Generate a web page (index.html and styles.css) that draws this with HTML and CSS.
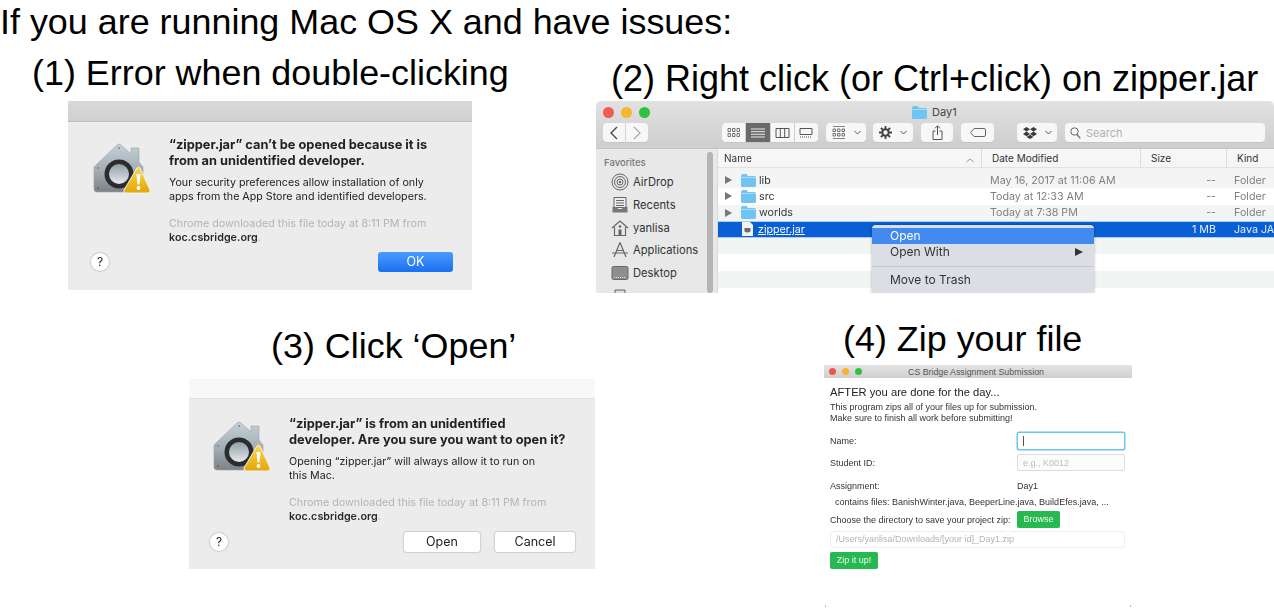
FILE: index.html
```html
<!DOCTYPE html>
<html lang="en">
<head>
  <meta charset="UTF-8" />
  <meta name="viewport" content="width=device-width, initial-scale=1.0"/>
  <title>Mac OS X issues</title>
  <link rel="stylesheet" href="styles.css">
</head>
<body>

  <svg class="defs" width="0" height="0">
    <defs>
      <linearGradient id="house" x1="0" y1="0" x2="0" y2="1">
        <stop offset="0" stop-color="#c4d2d9"/>
        <stop offset="0.55" stop-color="#a3adb3"/>
        <stop offset="1" stop-color="#7d8286"/>
      </linearGradient>
      <linearGradient id="knob" x1="0" y1="0" x2="0" y2="1">
        <stop offset="0" stop-color="#8f9fa8"/>
        <stop offset="1" stop-color="#e6e9ea"/>
      </linearGradient>
      <linearGradient id="warn" x1="0" y1="0" x2="0" y2="1">
        <stop offset="0" stop-color="#fbd84a"/>
        <stop offset="1" stop-color="#e2a50d"/>
      </linearGradient>
      <symbol id="gatekeeper" viewBox="0 0 58 56">
        <path d="M1 26 L24 4 Q26 2 28 4 L38 13 V7 H46 V21 L50 26 V48 Q50 51 47 51 H4 Q1 51 1 48 Z" fill="url(#house)" stroke="#9aa1a6" stroke-width=".6"/>
        <circle cx="5" cy="27" r="1" fill="#7d858a"/>
        <circle cx="26" cy="7" r="1" fill="#7d858a"/>
        <circle cx="5" cy="47" r="1" fill="#5f6468"/>
        <circle cx="26" cy="33" r="14.5" fill="#2c2c2e"/>
        <circle cx="26" cy="33" r="10" fill="url(#knob)"/>
        <path d="M44 27 Q45.5 25.5 47 27 L57 49 Q57.5 52 55 52 H33 Q30.5 52 31 49 Z" fill="url(#warn)" stroke="#f4f1e4" stroke-width="1"/>
        <path d="M43.4 33 H47.6 L46.4 43.5 H44.6 Z" fill="#fff"/>
        <circle cx="45.5" cy="47" r="1.9" fill="#fff"/>
      </symbol>
      <symbol id="folder" viewBox="0 0 15 13">
        <path d="M0 2 Q0 0 2 0 H5.5 L7 2 H13.5 Q15 2 15 3.5 V11.5 Q15 13 13.5 13 H1.5 Q0 13 0 11.5 Z" fill="#6fc4f2"/>
        <path d="M0 3.5 H15" stroke="#a8defa" stroke-width="1"/>
      </symbol>
    </defs>
  </svg>

  <h1 class="title">If you are running Mac OS X and have issues:</h1>

  <div class="row row-top">
    <section class="step step-one">
      <h2 class="step-head">(1) Error when double-clicking</h2>
      <div class="dialog dialog-one">
        <div class="dialog-bar"></div>
        <div class="dialog-main">
          <svg class="gate-icon"><use href="#gatekeeper"/></svg>
          <div class="dialog-text">
            <p class="d-title">“zipper.jar” can’t be opened because it is<br>from an unidentified developer.</p>
            <p class="d-body">Your security preferences allow installation of only<br>apps from the App Store and identified developers.</p>
            <p class="d-note">Chrome downloaded this file today at 8:11 PM from<br><b>koc.csbridge.org</b>.</p>
          </div>
        </div>
        <div class="dialog-foot">
          <span class="help">?</span>
          <span class="mac-btn mac-btn-blue">OK</span>
        </div>
      </div>
    </section>

    <section class="step step-two">
      <h2 class="step-head">(2) Right click (or Ctrl+click) on zipper.jar</h2>
      <div class="finder">
        <div class="finder-title">
          <i class="light light-red"></i><i class="light light-yellow"></i><i class="light light-green"></i>
          <span class="finder-name"><svg class="folder-sm"><use href="#folder"/></svg>Day1</span>
        </div>
        <div class="toolbar">
          <div class="tool tool-nav">
            <span class="nav-cell"><svg width="8" height="14" viewBox="0 0 8 14"><path d="M7 1 L1 7 L7 13" fill="none" stroke="#444" stroke-width="1.3"/></svg></span>
            <span class="nav-cell nav-next"><svg width="8" height="14" viewBox="0 0 8 14"><path d="M1 1 L7 7 L1 13" fill="none" stroke="#aaa" stroke-width="1.3"/></svg></span>
          </div>
          <div class="tool tool-views">
            <span class="view-cell"><svg width="14" height="9" viewBox="0 0 14 9"><path d="M1 .5h2.5v3H1zM5.5 .5h2.5v3H5.5zM10 .5h2.5v3H10zM1 5.5h2.5v3H1zM5.5 5.5h2.5v3H5.5zM10 5.5h2.5v3H10z" fill="none" stroke="#555" stroke-width=".8"/></svg></span>
            <span class="view-cell view-on"><svg width="14" height="10" viewBox="0 0 14 10"><path d="M0 1h14M0 3.7h14M0 6.3h14M0 9h14" stroke="#e8e8e8" stroke-width="1"/></svg></span>
            <span class="view-cell"><svg width="15" height="10" viewBox="0 0 15 10"><path d="M1 .5h13v9H1zM5.3 .5v9M9.7 .5v9" fill="none" stroke="#555" stroke-width="1"/></svg></span>
            <span class="view-cell"><svg width="14" height="10" viewBox="0 0 14 10"><path d="M1 .5h12v6H1z" fill="none" stroke="#555" stroke-width="1"/><path d="M1 9h12" stroke="#555" stroke-width="1.2" stroke-dasharray="1 1"/></svg></span>
          </div>
          <div class="tool tool-arrange">
            <svg width="14" height="13" viewBox="0 0 14 13"><path d="M1 .5h12M1 12.5h12" stroke="#666" stroke-width=".8"/><path d="M1 3h2.5v2.5H1zM5.5 3h2.5v2.5H5.5zM10 3h2.5v2.5H10zM1 7.5h2.5V10H1zM5.5 7.5h2.5V10H5.5zM10 7.5h2.5V10H10z" fill="none" stroke="#555" stroke-width=".8"/></svg>
            <svg class="chev" width="7" height="5" viewBox="0 0 7 5"><path d="M.5 1 L3.5 4 L6.5 1" fill="none" stroke="#555" stroke-width="1"/></svg>
          </div>
          <div class="tool tool-action">
            <svg width="13" height="13" viewBox="0 0 13 13"><circle cx="6.5" cy="6.5" r="3.2" fill="none" stroke="#444" stroke-width="2"/><path d="M6.5 0v3M6.5 10v3M0 6.5h3M10 6.5h3M1.9 1.9l2.1 2.1M9 9l2.1 2.1M11.1 1.9L9 4M4 9l-2.1 2.1" stroke="#444" stroke-width="1.8"/></svg>
            <svg class="chev" width="7" height="5" viewBox="0 0 7 5"><path d="M.5 1 L3.5 4 L6.5 1" fill="none" stroke="#555" stroke-width="1"/></svg>
          </div>
          <div class="tool tool-share">
            <svg width="11" height="15" viewBox="0 0 11 15"><path d="M3.5 6H1v8.5h9V6H7.5M5.5 10V1M3 3.3 L5.5 .8 L8 3.3" fill="none" stroke="#555" stroke-width="1"/></svg>
          </div>
          <div class="tool tool-tag">
            <svg width="16" height="9" viewBox="0 0 16 9"><path d="M4 .5H14Q15.5 .5 15.5 2V7Q15.5 8.5 14 8.5H4L.6 4.5Z" fill="none" stroke="#666" stroke-width="1"/></svg>
          </div>
          <div class="tool tool-drop">
            <svg width="14" height="12" viewBox="0 0 14 12"><path d="M3.5 0 L7 2.3 L3.5 4.6 L0 2.3ZM10.5 0 L14 2.3 L10.5 4.6 L7 2.3ZM3.5 4.6 L7 6.9 L3.5 9.2 L0 6.9ZM10.5 4.6 L14 6.9 L10.5 9.2 L7 6.9ZM3.5 10 L7 7.8 L10.5 10 L7 12Z" fill="#3a3a3a"/></svg>
            <svg class="chev" width="7" height="5" viewBox="0 0 7 5"><path d="M.5 1 L3.5 4 L6.5 1" fill="none" stroke="#555" stroke-width="1"/></svg>
          </div>
          <div class="tool tool-search">
            <svg width="11" height="12" viewBox="0 0 11 12"><circle cx="4.5" cy="4.5" r="3.7" fill="none" stroke="#666" stroke-width="1"/><path d="M7 7.5 L10.3 11.3" stroke="#666" stroke-width="1.2"/></svg>
            <span>Search</span>
          </div>
        </div>
        <div class="finder-body">
          <aside class="sidebar">
            <div class="side-head">Favorites</div>
            <div class="side-item">
              <svg width="18" height="18" viewBox="0 0 18 18"><g fill="none" stroke="#666" stroke-width="1"><circle cx="9" cy="9" r="8"/><circle cx="9" cy="9" r="5.5"/><circle cx="9" cy="9" r="3"/></g><circle cx="9" cy="9" r="1.2" fill="#666"/></svg>
              AirDrop
            </div>
            <div class="side-item">
              <svg width="18" height="18" viewBox="0 0 18 18"><path d="M3 1.5h12v10H3z" fill="#eee" stroke="#666"/><path d="M5 4.5h8M5 7h8M5 9.5h8" stroke="#666"/><path d="M1.5 11H6l1 2h4l1-2h4.5v5.5h-15z" fill="#777"/></svg>
              Recents
            </div>
            <div class="side-item">
              <svg width="18" height="18" viewBox="0 0 18 18"><path d="M1 9 L9 2 L17 9M3.5 8v8.5h11V8" fill="none" stroke="#666" stroke-width="1.2"/><path d="M7.5 10.5h3v6h-3z" fill="#666"/><circle cx="9" cy="7.5" r="1.3" fill="#666"/></svg>
              yanlisa
            </div>
            <div class="side-item">
              <svg width="18" height="18" viewBox="0 0 18 18"><path d="M9 1.5 L3 16M9 1.5 L15 16M1 12h16M5 9.5h8" fill="none" stroke="#666" stroke-width="1.2"/></svg>
              Applications
            </div>
            <div class="side-item">
              <svg width="18" height="18" viewBox="0 0 18 18"><rect x="1" y="2.5" width="16" height="13" rx="1.5" fill="#8b8f92" stroke="#666"/><path d="M3 13.5h12" stroke="#ddd" stroke-dasharray="1 1"/></svg>
              Desktop
            </div>
            <div class="side-item">
              <svg width="18" height="18" viewBox="0 0 18 18"><path d="M4 3h10v14H4z" fill="#ddd" stroke="#666"/></svg>
            </div>
            <span class="side-scroll"></span>
          </aside>
          <div class="list">
            <div class="list-head">
              <span class="cell-name">Name<svg class="sort" width="8" height="5" viewBox="0 0 8 5"><path d="M.5 4 L4 1 L7.5 4" fill="none" stroke="#999" stroke-width="1"/></svg></span>
              <span class="cell-date">Date Modified</span>
              <span class="cell-size">Size</span>
              <span class="cell-kind">Kind</span>
            </div>
            <div class="list-row row-first stripe">
              <span class="cell-name"><i class="arrow"></i><svg class="folder-sm"><use href="#folder"/></svg>lib</span>
              <span class="cell-date">May 16, 2017 at 11:06 AM</span>
              <span class="cell-size">--</span>
              <span class="cell-kind">Folder</span>
            </div>
            <div class="list-row">
              <span class="cell-name"><i class="arrow"></i><svg class="folder-sm"><use href="#folder"/></svg>src</span>
              <span class="cell-date">Today at 12:33 AM</span>
              <span class="cell-size">--</span>
              <span class="cell-kind">Folder</span>
            </div>
            <div class="list-row stripe">
              <span class="cell-name"><i class="arrow"></i><svg class="folder-sm"><use href="#folder"/></svg>worlds</span>
              <span class="cell-date">Today at 7:38 PM</span>
              <span class="cell-size">--</span>
              <span class="cell-kind">Folder</span>
            </div>
            <div class="list-row row-sel">
              <span class="cell-name"><svg class="jar" width="11" height="14" viewBox="0 0 11 14"><path d="M0 0h8l3 3v11H0z" fill="#f2f2f2"/><path d="M2.5 6h6v3.5q-3 2-6 0z" fill="#6b6b6b"/></svg>zipper.jar</span>
              <span class="cell-date"></span>
              <span class="cell-size">1 MB</span>
              <span class="cell-kind">Java JA</span>
            </div>
            <div class="list-row stripe"></div>
            <div class="list-row"></div>
            <div class="list-row stripe"></div>
            <div class="menu">
              <div class="menu-item menu-on">Open</div>
              <div class="menu-item">Open With<i class="menu-arrow"></i></div>
              <div class="menu-sep"></div>
              <div class="menu-item">Move to Trash</div>
            </div>
          </div>
        </div>
      </div>
    </section>
  </div>

  <div class="row row-bottom">
    <section class="step step-three">
      <h2 class="step-head">(3) Click ‘Open’</h2>
      <div class="dialog dialog-three">
        <div class="dialog-bar"></div>
        <div class="dialog-main">
          <svg class="gate-icon"><use href="#gatekeeper"/></svg>
          <div class="dialog-text">
            <p class="d-title">“zipper.jar” is from an unidentified<br>developer. Are you sure you want to open it?</p>
            <p class="d-body">Opening “zipper.jar” will always allow it to run on<br>this Mac.</p>
            <p class="d-note">Chrome downloaded this file today at 8:11 PM from<br><b>koc.csbridge.org</b>.</p>
          </div>
        </div>
        <div class="dialog-foot">
          <span class="help">?</span>
          <span class="mac-btn mac-btn-open">Open</span>
          <span class="mac-btn mac-btn-cancel">Cancel</span>
        </div>
      </div>
    </section>

    <section class="step step-four">
      <h2 class="step-head">(4) Zip your file</h2>
      <div class="zipapp">
        <div class="zip-title">
          <i class="zlight zlight-red"></i><i class="zlight zlight-yellow"></i><i class="zlight zlight-green"></i>
          <span>CS Bridge Assignment Submission</span>
        </div>
        <div class="zip-body">
          <h3 class="zip-head">AFTER you are done for the day...</h3>
          <p class="zip-intro">This program zips all of your files up for submission.<br>Make sure to finish all work before submitting!</p>
          <div class="zip-field zip-name">
            <label>Name:</label>
            <span class="zip-input zip-focus"><i class="caret"></i></span>
          </div>
          <div class="zip-field zip-id">
            <label>Student ID:</label>
            <span class="zip-input">e.g., K0012</span>
          </div>
          <div class="zip-field zip-assign">
            <label>Assignment:</label>
            <span class="zip-value">Day1</span>
          </div>
          <div class="zip-files">contains files: BanishWinter.java, BeeperLine.java, BuildEfes.java, ...</div>
          <div class="zip-field zip-dir">
            <label>Choose the directory to save your project zip:</label>
            <span class="zip-btn">Browse</span>
          </div>
          <div class="zip-path">/Users/yanlisa/Downloads/[your id]_Day1.zip</div>
          <span class="zip-btn zip-go">Zip it up!</span>
        </div>
      </div>
    </section>
  </div>

</body>
</html>
```

FILE: styles.css
```css
* {
  box-sizing: border-box;
}

html, body {
  height: 608px;
  overflow: hidden;
}

body {
  margin: 0;
  background: #fff;
  color: #000;
  font-family: "Liberation Sans", Arial, sans-serif;
}

p, h1, h2, h3 {
  margin: 0;
  font-weight: normal;
}

i {
  display: block;
  font-style: normal;
}

.defs {
  display: block;
  height: 0;
}

.title {
  height: 44px;
  font-size: 35.9px;
  line-height: 44px;
  white-space: nowrap;
}

.row {
  display: flex;
}

.row-top {
  height: 249px;
  align-items: flex-end;
  padding-bottom: 2px;
}

.row-top .step {
  height: 247px;
}

.row-bottom {
  height: 315px;
}

.step-head {
  font-size: 35.9px;
  line-height: 44px;
  white-space: nowrap;
}

/* top row */
.step-one {
  width: 596px;
  padding: 7px 0 0 68px;
}

.step-one .step-head {
  margin-left: -36px;
  height: 50px;
}

.step-two {
  width: 678px;
  padding-top: 13px;
}

.step-two .step-head {
  margin-left: 15px;
  height: 44px;
  font-size: 36px;
}

/* bottom row */
.step-three {
  width: 635px;
  padding: 31px 0 0 189px;
}

.step-three .step-head {
  margin-left: 82px;
  height: 55px;
}

.step-four {
  width: 639px;
  padding: 24px 0 0 189px;
}

.step-four .step-head {
  margin-left: 19px;
  height: 48px;
}

/* security dialogs */
.dialog {
  display: flex;
  flex-direction: column;
  background: #ececec;
  color: #222;
  font-family: Inter, "Liberation Sans", sans-serif;
  filter: blur(.35px);
}

.dialog-one {
  width: 404px;
  height: 189px;
}

.dialog-three {
  width: 406px;
  height: 190px;
}

.dialog-bar {
  height: 21px;
  background: linear-gradient(#d9d9d9, #d0d0d0);
  border-bottom: 1px solid #bdbdbd;
}

.dialog-three .dialog-bar {
  height: 20px;
  background: #f8f8f8;
  border-bottom-color: #e2e2e2;
}

.dialog-main {
  display: flex;
  flex: 1;
  padding-top: 15px;
}

.dialog-three .dialog-main {
  padding-top: 17px;
}

.gate-icon {
  width: 58px;
  height: 56px;
  margin: 4px 18px 0 25px;
  flex: none;
}

.dialog-three .gate-icon {
  margin: 3px 18px 0 24px;
}

.d-title {
  font-size: 12.8px;
  line-height: 16px;
  font-weight: 700;
  white-space: nowrap;
}

.d-body {
  margin-top: 7px;
  font-size: 10.7px;
  line-height: 13.5px;
  white-space: nowrap;
}

.d-note {
  margin-top: 14px;
  font-size: 10.75px;
  line-height: 13.5px;
  color: #b4b4b4;
  white-space: nowrap;
}

.d-note b {
  color: #2a2a2a;
  font-weight: 600;
}

.dialog-foot {
  display: flex;
  align-items: center;
  height: 37px;
  padding: 0 19px 19px 23px;
}

.dialog-three .dialog-foot {
  height: 38px;
  padding: 0 20px 17px 21px;
}

.help {
  width: 18px;
  height: 18px;
  border-radius: 50%;
  background: #fff;
  box-shadow: 0 0 1px 1px #ccc;
  font-size: 12px;
  line-height: 18px;
  text-align: center;
}

.mac-btn {
  height: 20px;
  border-radius: 3px;
  background: #fff;
  box-shadow: 0 0 1px 1px #d0d0d0;
  font-size: 12.5px;
  line-height: 20px;
  text-align: center;
}

.mac-btn-blue {
  width: 75px;
  margin-left: auto;
  background: linear-gradient(#4a9cfb, #1a70f0);
  box-shadow: none;
  color: #fff;
}

.mac-btn-open {
  width: 76px;
  margin-left: auto;
}

.mac-btn-cancel {
  width: 80px;
  margin-left: 15px;
}

/* finder window */
.finder {
  position: relative;
  width: 678px;
  height: 192px;
  overflow: hidden;
  border-radius: 5px 5px 0 0;
  background: #fff;
  color: #333;
  font-family: Inter, "Liberation Sans", sans-serif;
  filter: blur(.35px);
}

.finder-title {
  position: relative;
  display: flex;
  align-items: center;
  height: 22px;
  padding-left: 7px;
  gap: 7px;
  background: linear-gradient(#e2e2e2, #d8d8d8);
}

.light {
  width: 11px;
  height: 11px;
  border-radius: 50%;
}

.light-red { background: #f25c54; }
.light-yellow { background: #f6b62f; }
.light-green { background: #2fc140; }

.finder-name {
  display: flex;
  align-items: center;
  gap: 2px;
  margin-left: 255px;
  font-size: 11px;
  color: #444;
}

.toolbar {
  display: flex;
  height: 26px;
  padding: 0 9px 6px 7px;
  background: linear-gradient(#d8d8d8, #cecece);
  border-bottom: 1px solid #c4c4c4;
}

.tool {
  display: flex;
  align-items: center;
  justify-content: center;
  height: 19px;
  border-radius: 4px;
  background: #f7f7f7;
  box-shadow: 0 .5px 0 #bbb;
}

.chev {
  margin-left: 8px;
}

.tool-nav {
  width: 45px;
  background: none;
  box-shadow: none;
  gap: 1px;
}

.nav-cell {
  flex: 1;
  display: flex;
  align-items: center;
  justify-content: center;
  height: 19px;
  background: #f7f7f7;
  border-radius: 4px 0 0 4px;
  box-shadow: 0 .5px 0 #bbb;
}

.nav-next {
  border-radius: 0 4px 4px 0;
}

.tool-views {
  width: 96px;
  margin-left: 74px;
  overflow: hidden;
  gap: 1px;
  background: #d0d0d0;
}

.view-cell {
  flex: 1;
  display: flex;
  align-items: center;
  justify-content: center;
  height: 19px;
  background: #f7f7f7;
}

.view-on {
  background: #6a6a6a;
}

.tool-arrange {
  width: 40px;
  margin-left: 8px;
}

.tool-action {
  width: 40px;
  margin-left: 7px;
}

.tool-share {
  width: 32px;
  margin-left: 8px;
}

.tool-tag {
  width: 33px;
  margin-left: 8px;
}

.tool-drop {
  width: 40px;
  margin-left: 23px;
}

.tool-search {
  width: 200px;
  margin-left: 8px;
  justify-content: flex-start;
  gap: 5px;
  padding-left: 5px;
  font-size: 11px;
  color: #b0b0b0;
}

.finder-body {
  display: flex;
  height: 144px;
}

.sidebar {
  position: relative;
  width: 122px;
  flex: none;
  padding: 6px 0 0 8px;
  background: #e8e8e8;
  border-right: 1px solid #d8d8d8;
  font-size: 11.2px;
}

.side-head {
  height: 16px;
  font-size: 9.5px;
  line-height: 15px;
  font-weight: 500;
  color: #777;
}

.side-item {
  display: flex;
  align-items: center;
  gap: 4px;
  height: 22.7px;
  padding-left: 7px;
  white-space: nowrap;
}

.side-scroll {
  position: absolute;
  top: 3px;
  right: 4px;
  bottom: 0;
  width: 6px;
  border-radius: 3px;
  background: #b4b4b4;
}

.list {
  position: relative;
  flex: 1;
  font-size: 10.7px;
}

.list-head, .list-row {
  display: grid;
  grid-template-columns: 263px 159px 86px 48px;
  align-items: center;
  height: 16.6px;
  white-space: nowrap;
}

.list-head {
  height: 19px;
  background: #f6f6f6;
  border-bottom: 1px solid #e2e2e2;
  font-size: 10px;
}

.list-head .cell-name { padding-left: 6px; position: relative; }
.list-head .cell-date { padding-left: 10px; border-left: 1px solid #dcdcdc; line-height: 18px; }
.list-head .cell-size { padding-left: 10px; border-left: 1px solid #dcdcdc; line-height: 18px; }
.list-head .cell-kind { padding-left: 10px; border-left: 1px solid #dcdcdc; line-height: 18px; }

.sort {
  position: absolute;
  top: 6px;
  left: 248px;
}

.list-row .cell-name {
  display: flex;
  align-items: center;
  padding-left: 7px;
}

.list-row .cell-date {
  padding-left: 9px;
  color: #808080;
}

.list-row .cell-size {
  padding-right: 10px;
  text-align: right;
  color: #808080;
}

.list-row .cell-kind {
  padding-left: 8px;
  color: #808080;
}

.row-first {
  height: 20px;
  padding-top: 4px;
}

.stripe {
  background: #f3f5f5;
}

.arrow {
  width: 0;
  height: 0;
  margin-right: 9px;
  border-top: 4px solid transparent;
  border-bottom: 4px solid transparent;
  border-left: 7px solid #777;
}

.folder-sm {
  width: 15px;
  height: 13px;
  margin-right: 3px;
}

.row-sel {
  background: #0a5fd4;
  border: solid #aacbf2;
  border-width: 1px 0;
  color: #fff;
}

.row-sel .cell-name {
  padding-left: 24px;
  text-decoration: underline;
  text-decoration-thickness: 1px;
}

.row-sel .cell-size, .row-sel .cell-kind {
  color: #e4edfa;
}

.jar {
  margin-right: 5px;
}

.menu {
  position: absolute;
  top: 76px;
  left: 154px;
  width: 222px;
  height: 70px;
  padding-top: 3px;
  background: #dcdee6;
  border-radius: 4px 4px 0 0;
  box-shadow: 0 0 3px rgba(0, 0, 0, .3);
  font-size: 12px;
  color: #333;
}

.menu-item {
  position: relative;
  height: 16px;
  padding-left: 18px;
  line-height: 16px;
}

.menu-on {
  background: #4289f0;
  color: #fff;
}

.menu-sep {
  height: 1px;
  margin: 6px 0 5px;
  background: #c6c8cf;
}

.menu-arrow {
  position: absolute;
  top: 4px;
  right: 11px;
  width: 0;
  height: 0;
  border-top: 4px solid transparent;
  border-bottom: 4px solid transparent;
  border-left: 8px solid #333;
}

/* zip app */
.zipapp {
  position: relative;
  width: 308px;
  height: 243px;
  font-family: "Liberation Sans", Arial, sans-serif;
  color: #333;
  filter: blur(.3px);
}

.zipapp::before, .zipapp::after {
  content: "";
  position: absolute;
  bottom: 1px;
  width: 1px;
  height: 2px;
  background: #bbb;
}

.zipapp::before { left: 1px; }
.zipapp::after { right: 1px; }

.zip-title {
  position: relative;
  display: flex;
  align-items: center;
  justify-content: center;
  height: 13px;
  background: linear-gradient(#e4e4e4, #cfcfcf);
  font-size: 8.8px;
  color: #555;
}

.zip-title span {
  margin-left: -4px;
}

.zlight {
  position: absolute;
  top: 3px;
  width: 7px;
  height: 7px;
  border-radius: 50%;
}

.zlight-red { left: 5px; background: #f2544c; }
.zlight-yellow { left: 18px; background: #f5b52e; }
.zlight-green { left: 31px; background: #30c23f; }

.zip-body {
  padding: 7px 6px 0;
  font-size: 9px;
}

.zip-head {
  font-size: 11.2px;
  line-height: 14px;
  color: #222;
}

.zip-intro {
  margin-top: 3px;
  line-height: 11px;
  white-space: nowrap;
}

.zip-field {
  display: flex;
  align-items: center;
  white-space: nowrap;
}

.zip-field label {
  width: 187px;
  flex: none;
}

.zip-name {
  margin-top: 8px;
  height: 18px;
}

.zip-id {
  margin-top: 4px;
  height: 17px;
}

.zip-assign {
  margin-top: 8px;
  height: 14px;
}

.zip-input {
  display: flex;
  align-items: center;
  width: 108px;
  height: 100%;
  padding-left: 5px;
  background: #fcfcfc;
  border: 1px solid #dcdcdc;
  border-radius: 2px;
  color: #bdbdbd;
}

.zip-focus {
  background: #fff;
  border-color: #6ac4ee;
  box-shadow: 0 0 0 .5px #6ac4ee;
}

.caret {
  width: 1px;
  height: 10px;
  background: #555;
}

.zip-files {
  margin-top: 2px;
  padding-left: 5px;
  height: 14px;
  line-height: 14px;
  white-space: nowrap;
}

.zip-dir {
  margin-top: 2px;
  height: 17px;
}

.zip-btn {
  display: inline-block;
  width: 43px;
  height: 17px;
  border-radius: 2px;
  background: #27b94f;
  color: #eefaf0;
  line-height: 17px;
  text-align: center;
}

.zip-path {
  width: 295px;
  height: 17px;
  margin-top: 3px;
  padding-left: 5px;
  border: 1px solid #efefef;
  border-radius: 2px;
  color: #b4b4b4;
  line-height: 15px;
}

.zip-go {
  display: block;
  width: 48px;
  margin-top: 4px;
}
```
